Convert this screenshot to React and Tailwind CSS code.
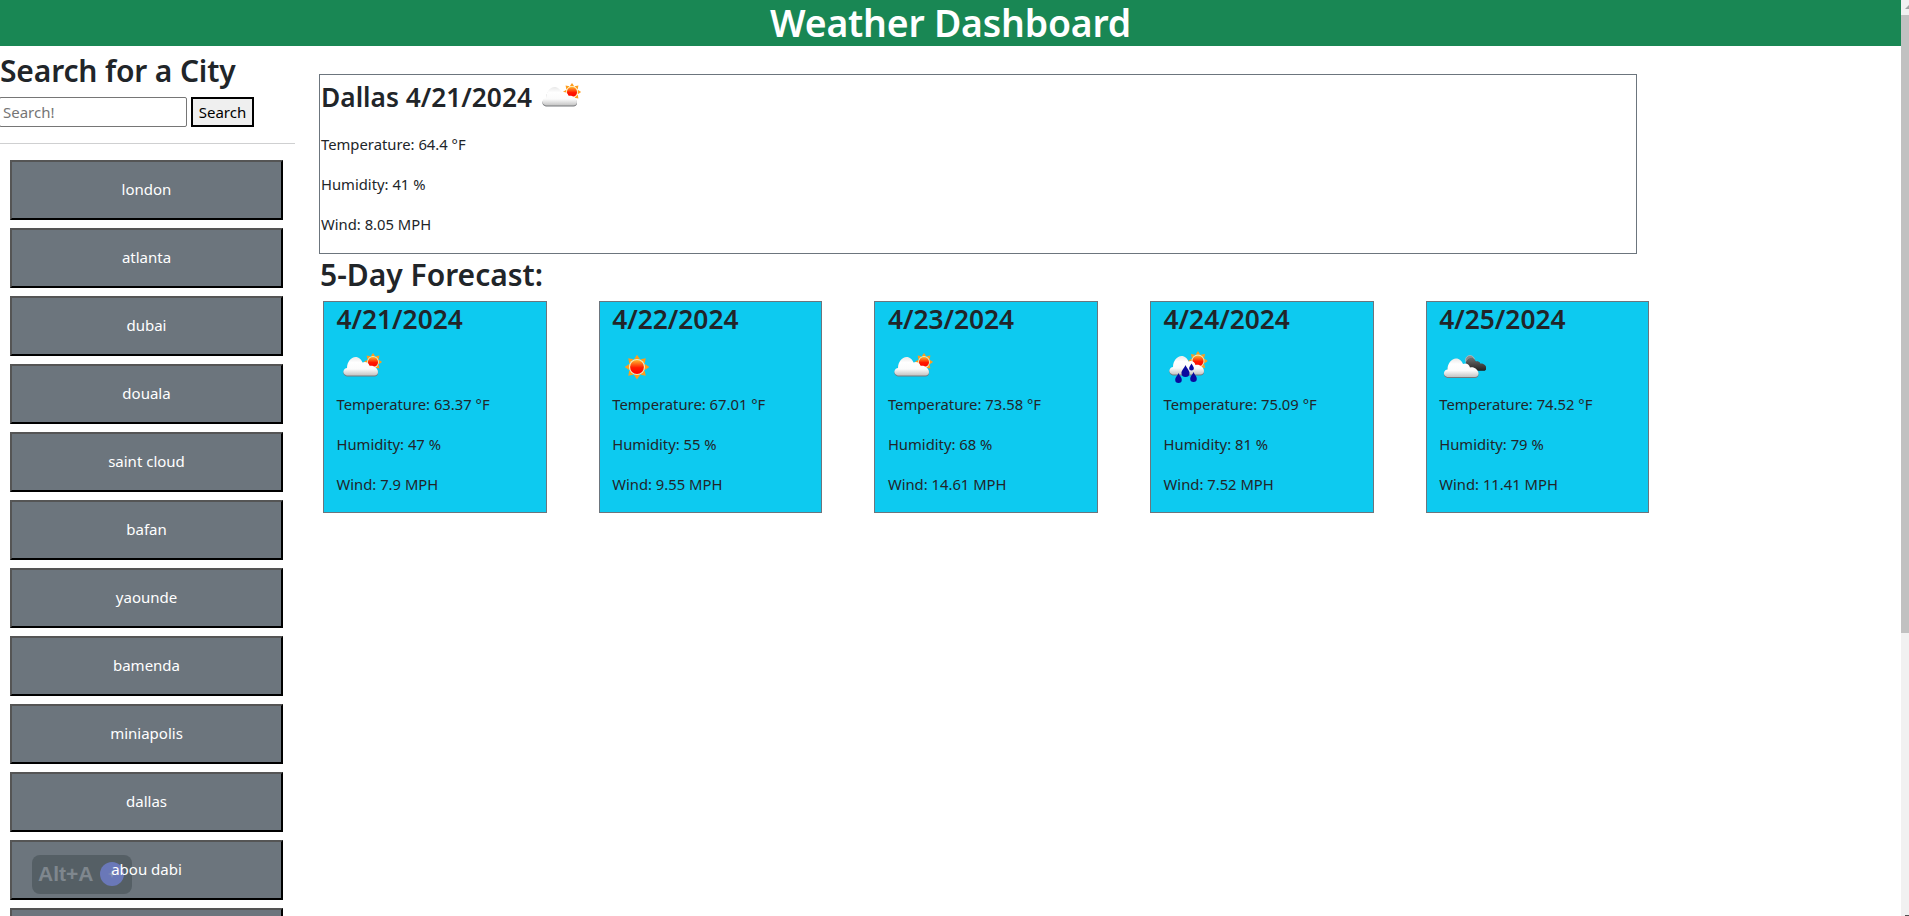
import React from "react";

const cities = ["london", "atlanta", "dubai", "douala", "saint cloud", "bafan", "yaounde", "bamenda", "miniapolis", "dallas", "abou dabi", ""];

const forecast = [
  { date: "4/21/2024", icon: "02d", temp: "63.37", humidity: "47", wind: "7.9" },
  { date: "4/22/2024", icon: "01d", temp: "67.01", humidity: "55", wind: "9.55" },
  { date: "4/23/2024", icon: "02d", temp: "73.58", humidity: "68", wind: "14.61" },
  { date: "4/24/2024", icon: "10d", temp: "75.09", humidity: "81", wind: "7.52" },
  { date: "4/25/2024", icon: "04d", temp: "74.52", humidity: "79", wind: "11.41" },
];

const CLOUD = "M11 33.5C7.5 33.5 6 31 6.5 29C7 27 8.5 26 10 26C10 20 14 15 18.5 15C22 15 24.5 17.5 25.5 20.5C28.5 19 31.5 20.5 32.5 24C33.5 23.5 35 23.5 36 24C39 25 41 27.5 41 30C41 32 39.5 33.5 37.5 33.5Z";

const Sun = ({ cx, cy, r }) => {
  const rays = [0, 45, 90, 135, 180, 225, 270, 315];
  return (
    <g>
      {rays.map((a) => (
        <polygon
          key={a}
          points={`${cx - r * 0.4},${cy - r * 1.05} ${cx + r * 0.4},${cy - r * 1.05} ${cx},${cy - r * 1.65}`}
          transform={`rotate(${a} ${cx} ${cy})`}
          fill="#ff9d1c"
        />
      ))}
      <circle cx={cx} cy={cy} r={r * 1.08} fill="#ffe9b0" />
      <circle cx={cx} cy={cy} r={r * 0.92} fill="url(#sunFill)" />
    </g>
  );
};

const Cloud = ({ dark, transform }) => (
  <g transform={transform}>
    <path d={CLOUD} transform="translate(0 1)" fill={dark ? "#1c1c1c" : "#77797c"} />
    <path d={CLOUD} fill={dark ? "url(#darkFill)" : "url(#cloudFill)"} />
  </g>
);

const Drop = ({ x, y, s = 1 }) => (
  <path
    d={`M${x} ${y - 4.5 * s}C${x + 1 * s} ${y - 2 * s} ${x + 3 * s} ${y - 0.5 * s} ${x + 3 * s} ${y + 1.5 * s}A${3 * s} ${3 * s} 0 0 1 ${x - 3 * s} ${y + 1.5 * s}C${x - 3 * s} ${y - 0.5 * s} ${x - 1 * s} ${y - 2 * s} ${x} ${y - 4.5 * s}Z`}
    fill="#0a0a9e"
  />
);

const WeatherIcon = ({ type, className = "" }) => (
  <svg viewBox="0 0 50 50" className={`w-[50px] h-[50px] shrink-0 ${className}`}>
    <defs>
      <linearGradient id="sunFill" x1="0" y1="0" x2="0" y2="1">
        <stop offset="0" stopColor="#ffb52e" />
        <stop offset="0.55" stopColor="#ff1a00" />
        <stop offset="1" stopColor="#ff0000" />
      </linearGradient>
      <linearGradient id="cloudFill" x1="0" y1="0" x2="0" y2="1">
        <stop offset="0" stopColor="#e9e9e9" />
        <stop offset="0.3" stopColor="#ffffff" />
        <stop offset="0.65" stopColor="#fbfbfb" />
        <stop offset="1" stopColor="#c4c4c4" />
      </linearGradient>
      <linearGradient id="darkFill" x1="0" y1="0" x2="0" y2="1">
        <stop offset="0" stopColor="#6e6e6e" />
        <stop offset="1" stopColor="#262626" />
      </linearGradient>
    </defs>
    {type === "01d" && <Sun cx={25} cy={25} r={7.5} />}
    {type === "02d" && (
      <>
        <Sun cx={36} cy={20} r={5.5} />
        <Cloud />
      </>
    )}
    {type === "10d" && (
      <>
        <Sun cx={34} cy={19} r={6} />
        <Cloud transform="translate(-1 -1)" />
        <Drop x={21.5} y={29} s={1.35} />
        <Drop x={14.5} y={36} s={1.1} />
        <Drop x={29.5} y={35} s={1.1} />
        <Drop x={27.5} y={25} s={0.8} />
      </>
    )}
    {type === "04d" && (
      <>
        <circle cx={31} cy={18} r={4.5} fill="#8a8a8a" stroke="#c9c9c9" strokeWidth="0.6" />
        <Cloud dark transform="translate(20 6) scale(0.66)" />
        <Cloud transform="translate(-1.5 1.5)" />
      </>
    )}
  </svg>
);

const App = () => {
  return (
    <div className="flex w-full h-screen overflow-hidden bg-white text-[#212529] text-[16px] leading-6 font-['Noto_Sans','Open_Sans',sans-serif]">
      <div className="relative flex-1 min-w-0 overflow-hidden">
        <header className="h-[46px] bg-[#198754] text-white text-center text-[37.4px] leading-[46px] font-semibold tracking-[-0.2px]">
          Weather Dashboard
        </header>

        <div className="flex">
          <aside className="w-[295px] shrink-0 pt-[6px]">
            <h2 className="text-[30px] leading-[38px] font-semibold mb-[7px] tracking-[-0.15px] whitespace-nowrap">Search for a City</h2>
            <form className="flex gap-[4px] h-[30px]" onSubmit={(e) => e.preventDefault()}>
              <input
                placeholder="Search!"
                className="w-[188px] h-[30px] -ml-px pl-[3px] text-[15px] bg-white border border-[#767676] rounded-[2px] outline-none placeholder:text-[#757575]"
              />
              <button type="button" className="w-[63px] h-[30px] text-[15px] text-black bg-[#efefef] border-2 border-black">
                Search
              </button>
            </form>
            <hr className="mt-[16px] mb-[16px] border-t border-[#cfd0d1]" />
            <div className="flex flex-col gap-[8px] px-[10px] w-[293px]">
              {cities.map((city, i) => (
                <button
                  key={i}
                  type="button"
                  className="h-[60px] shrink-0 bg-[#6c757d] text-white text-[15px] pb-[2px] border-2 border-t-[#555555] border-l-[#555555] border-r-black border-b-black"
                >
                  <span className="relative z-10">{city}</span>
                </button>
              ))}
            </div>
          </aside>

          <main className="flex-1 min-w-0 pl-[24px] pt-[28px]">
            <section className="w-[1318px] h-[180px] border border-[#6c757d] pl-px">
              <h3 className="flex items-center h-[50px] mb-[8px] text-[26.3px] font-semibold whitespace-nowrap -mt-[1px] pb-[4px]">
                Dallas 4/21/2024
                <WeatherIcon type="02d" className="ml-[4px]" />
              </h3>
              <p className="text-[14.8px] mb-4">Temperature: 64.4 °F</p>
              <p className="text-[14.8px] mb-4">Humidity: 41 %</p>
              <p className="text-[14.8px]">Wind: 8.05 MPH</p>
            </section>

            <h2 className="mt-[2px] pl-px text-[30px] leading-[38px] font-semibold whitespace-nowrap">5-Day Forecast:</h2>

            <div className="flex gap-[52px] ml-[4px] mt-[7px]">
              {forecast.map((day) => (
                <div key={day.date} className="w-[223.7px] h-[212px] shrink-0 bg-[#0dcaf0] border border-[#6c757d] pl-[12.5px]">
                  <h3 className="text-[26.3px] leading-[34px] font-semibold mb-[6px]">{day.date}</h3>
                  <WeatherIcon type={day.icon} />
                  <p className="text-[14.8px] mb-4">Temperature: {day.temp} °F</p>
                  <p className="text-[14.8px] mb-4">Humidity: {day.humidity} %</p>
                  <p className="text-[14.8px]">Wind: {day.wind} MPH</p>
                </div>
              ))}
            </div>
          </main>
        </div>

        <div className="absolute left-[32px] top-[855px] w-[100px] h-[39px] flex items-center pl-[6px] pb-[2px] rounded-[8px] bg-[#4c555b]/70 text-[#7f878e] text-[21px] font-bold font-['Liberation_Sans',sans-serif]">
          Alt+A
          <span className="absolute left-[68px] top-[7px] w-[24px] h-[24px] rounded-full bg-[#6a78b8] flex items-center justify-center">
            <svg viewBox="0 0 12 12" className="w-[10px] h-[10px]" fill="#8e97b0">
              <path d="M6 1L7 5L11 6L7 7L6 11L5 7L1 6L5 5Z" />
            </svg>
          </span>
        </div>
      </div>

      {/* scrollbar */}
      <div className="relative w-[8px] shrink-0 h-full bg-[#f1f1f1]">
        <svg viewBox="0 0 8 15" className="w-[8px] h-[15px]">
          <polygon points="8,5 8,9 4,9" fill="#a3a3a3" />
        </svg>
        <div className="w-full h-[618px] bg-[#c1c1c1]" />
        <div className="absolute right-0 bottom-0 w-[4px] h-px bg-[#505050]" />
      </div>
    </div>
  );
};

export default App;
